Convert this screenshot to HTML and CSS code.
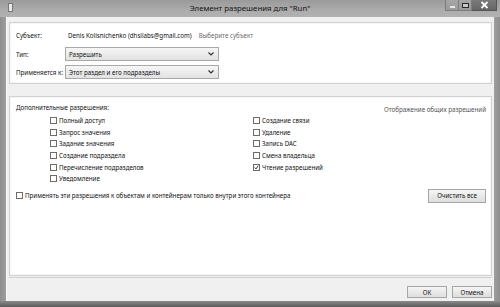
FILE: index.html
```html
<!DOCTYPE html>
<html lang="ru">
<head>
<meta charset="utf-8">
<title>Элемент разрешения</title>
<link rel="stylesheet" href="styles.css">
</head>
<body>
<div class="window">
  <div class="titlebar">
    <div class="appicon"></div>
    <div class="title">Элемент разрешения для "Run"</div>
    <div class="wbtns">
      <div class="wbtn min"><span class="minbar"></span></div>
      <div class="wbtn max"><span class="maxbox"></span></div>
      <div class="wbtn close">
        <svg width="9" height="8" viewBox="0 0 9 8"><path d="M1.5 1 L7.5 7 M7.5 1 L1.5 7" stroke="#fff" stroke-width="1.8"/></svg>
      </div>
    </div>
  </div>
  <div class="client">
    <div class="panel top">
      <div class="row subj">
        <span class="lbl">Субъект:</span>
        <span class="who">Denis Kolisnichenko (dhsilabs@gmail.com)</span>
        <span class="link">Выберите субъект</span>
      </div>
      <div class="row">
        <span class="lbl">Тип:</span>
        <div class="select"><span>Разрешить</span><svg width="6" height="4" viewBox="0 0 6 4"><path d="M0.5 0.5 L3 3 L5.5 0.5" fill="none" stroke="#333" stroke-width="1.2"/></svg></div>
      </div>
      <div class="row">
        <span class="lbl">Применяется к:</span>
        <div class="select"><span>Этот раздел и его подразделы</span><svg width="6" height="4" viewBox="0 0 6 4"><path d="M0.5 0.5 L3 3 L5.5 0.5" fill="none" stroke="#333" stroke-width="1.2"/></svg></div>
      </div>
    </div>
    <div class="panel perms">
      <div class="phead">
        <span>Дополнительные разрешения:</span>
        <span class="link2">Отображение общих разрешений</span>
      </div>
      <div class="grid">
        <div class="col left">
          <label class="cb"><span class="box"></span>Полный доступ</label>
          <label class="cb"><span class="box"></span>Запрос значения</label>
          <label class="cb"><span class="box"></span>Задание значения</label>
          <label class="cb"><span class="box"></span>Создание подраздела</label>
          <label class="cb"><span class="box"></span>Перечисление подразделов</label>
          <label class="cb"><span class="box"></span>Уведомление</label>
        </div>
        <div class="col right">
          <label class="cb"><span class="box"></span>Создание связи</label>
          <label class="cb"><span class="box"></span>Удаление</label>
          <label class="cb"><span class="box"></span>Запись DAC</label>
          <label class="cb"><span class="box"></span>Смена владельца</label>
          <label class="cb"><span class="box checked"><svg width="7" height="7" viewBox="0 0 7 7"><path d="M1 3.5 L2.8 5.5 L6 1" fill="none" stroke="#222" stroke-width="1.3"/></svg></span>Чтение разрешений</label>
        </div>
      </div>
      <div class="applyrow">
        <label class="cb"><span class="box"></span>Применять эти разрешения к объектам и контейнерам только внутри этого контейнера</label>
        <button class="btn clear">Очистить все</button>
      </div>
    </div>
    <div class="footer">
      <button class="btn ok">ОК</button>
      <button class="btn cancel">Отмена</button>
    </div>
  </div>
  <div class="bottomframe"></div>
</div>
</body>
</html>
```
FILE: styles.css
```css
* { box-sizing: border-box; }
html, body { margin: 0; padding: 0; }
body {
  width: 500px;
  height: 307px;
  overflow: hidden;
  font-family: "Noto Sans", "Open Sans", sans-serif;
  font-size: 6.2px;
  color: #111;
  background: #9c9c9c;
}
.window {
  width: 500px;
  height: 307px;
  display: flex;
  flex-direction: column;
  background: linear-gradient(90deg, #8e8e8e 0, #a4a4a4 8px, #a8a8a8 50%, #a4a4a4 492px, #8e8e8e 500px);
}
.titlebar {
  height: 17px;
  display: grid;
  grid-template-columns: 1fr auto 1fr;
  align-items: start;
  background: linear-gradient(180deg, #9a9a9a, #acacac 60%, #b2b2b2);
}
.appicon {
  width: 5px;
  height: 9px;
  margin: 3px 0 0 8px;
  background: #e8e8e8;
  border: 1px solid #777;
}
.title {
  font-size: 7.8px;
  color: #111;
  padding-top: 3px;
}
.wbtns {
  justify-self: end;
  display: flex;
  margin-right: 3px;
}
.wbtn {
  height: 11px;
  display: flex;
  align-items: center;
  justify-content: center;
}
.min { width: 13px; background: linear-gradient(180deg, #a6a6a6, #9a9a9a); border: 1px solid #7c7c7c; border-top: none; border-right: none; }
.max { width: 14px; background: linear-gradient(180deg, #a6a6a6, #9a9a9a); border: 1px solid #7c7c7c; border-top: none; }
.close { width: 25px; background: linear-gradient(180deg, #7a7a7a, #666); border: 1px solid #555; border-top: none; border-left: none; }
.minbar { width: 5px; height: 2px; background: #e6e6e6; margin-top: 4px; }
.maxbox { width: 7px; height: 5px; border: 1.5px solid #2a2a2a; background: #c8c8c8; }
.client {
  flex: 1;
  margin: 0 6px 0 6px;
  background: #f0f0f0;
  display: flex;
  flex-direction: column;
  padding: 5px 2px 0 2px;
  border-left: 1px solid #fafafa;
}
.panel {
  background: #fff;
  border: 1px solid #d2d2d2;
  box-shadow: inset 0 0 0 1px #f6f6f6;
}
.panel.top {
  height: 62px;
  padding: 8px 0 0 6px;
  display: flex;
  flex-direction: column;
}
.row {
  display: flex;
  align-items: center;
  height: 14px;
  margin-bottom: 4px;
}
.row.subj { height: 10px; margin-bottom: 7px; }
.lbl { width: 49px; flex: none; }
.who { margin-left: 3px; }
.link { margin-left: 7px; color: #6a6a6a; }
.select {
  width: 154px;
  height: 14px;
  border: 1px solid #a9a9a9;
  background: linear-gradient(180deg, #f6f6f6, #e2e2e2);
  display: flex;
  align-items: center;
  justify-content: space-between;
  padding: 0 4px 0 3px;
}
.panel.perms {
  margin-top: 12px;
  height: 180px;
  padding: 6px 5px 0 6px;
  display: flex;
  flex-direction: column;
}
.phead {
  display: flex;
  justify-content: space-between;
  align-items: flex-start;
  height: 12px;
}
.link2 { color: #555; margin-top: 2px; }
.grid {
  display: grid;
  grid-template-columns: 203px 1fr;
  padding-left: 34px;
}
.col { display: flex; flex-direction: column; }
.cb {
  display: flex;
  align-items: center;
  height: 11.6px;
  white-space: nowrap;
}
.box {
  width: 7px;
  height: 7px;
  border: 1px solid #6c6c6c;
  background: #fff;
  margin-right: 2px;
  flex: none;
  display: flex;
  align-items: center;
  justify-content: center;
}
.box svg { display: block; }
.applyrow {
  margin-top: 4px;
  display: flex;
  justify-content: space-between;
  align-items: center;
}
.btn {
  font-family: inherit;
  font-size: 6.2px;
  color: #111;
  border: 1px solid #a6a6a6;
  background: linear-gradient(180deg, #f5f5f5, #dedede);
  padding: 0;
  margin: 0;
  height: 13px;
}
.clear { width: 58px; height: 14px; }
.footer {
  flex: 1;
  display: flex;
  justify-content: flex-end;
  align-items: flex-start;
  padding: 8px 0 0 0;
  gap: 5px;
  margin-top: 1px;
  border-top: 1px solid #cfcfcf;
}
.ok { width: 40px; height: 12px; }
.cancel { width: 40px; height: 12px; }
.bottomframe {
  height: 6px;
  background: linear-gradient(180deg, #8a8a8a, #5a5a5a);
}
```
